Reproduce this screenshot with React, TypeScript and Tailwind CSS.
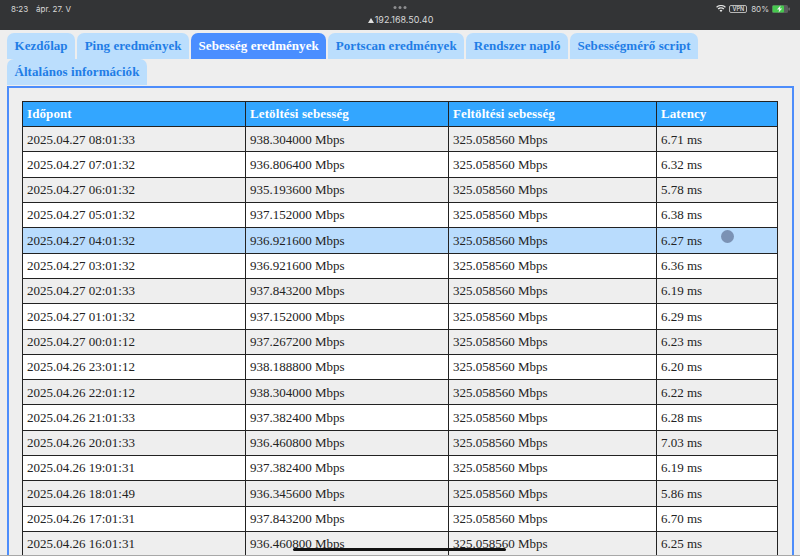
const tabs = [
  { label: 'Kezdőlap' },
  { label: 'Ping eredmények' },
  { label: 'Sebesség eredmények', active: true },
  { label: 'Portscan eredmények' },
  { label: 'Rendszer napló' },
  { label: 'Sebességmérő script' },
  { label: 'Általános információk' },
]

const rows = [
  ['2025.04.27 08:01:33', '938.304000 Mbps', '6.71 ms'],
  ['2025.04.27 07:01:32', '936.806400 Mbps', '6.32 ms'],
  ['2025.04.27 06:01:32', '935.193600 Mbps', '5.78 ms'],
  ['2025.04.27 05:01:32', '937.152000 Mbps', '6.38 ms'],
  ['2025.04.27 04:01:32', '936.921600 Mbps', '6.27 ms'],
  ['2025.04.27 03:01:32', '936.921600 Mbps', '6.36 ms'],
  ['2025.04.27 02:01:33', '937.843200 Mbps', '6.19 ms'],
  ['2025.04.27 01:01:32', '937.152000 Mbps', '6.29 ms'],
  ['2025.04.27 00:01:12', '937.267200 Mbps', '6.23 ms'],
  ['2025.04.26 23:01:12', '938.188800 Mbps', '6.20 ms'],
  ['2025.04.26 22:01:12', '938.304000 Mbps', '6.22 ms'],
  ['2025.04.26 21:01:33', '937.382400 Mbps', '6.28 ms'],
  ['2025.04.26 20:01:33', '936.460800 Mbps', '7.03 ms'],
  ['2025.04.26 19:01:31', '937.382400 Mbps', '6.19 ms'],
  ['2025.04.26 18:01:49', '936.345600 Mbps', '5.86 ms'],
  ['2025.04.26 17:01:31', '937.843200 Mbps', '6.70 ms'],
  ['2025.04.26 16:01:31', '936.460800 Mbps', '6.25 ms'],
]

function rowColor(i: number) {
  if (i === 4) return 'bg-[#b9dcfd]'
  return i % 2 === 0 ? 'bg-[#eeeeee]' : 'bg-white'
}

function StatusBar() {
  return (
    <div className="relative h-[30px] shrink-0 bg-[#333436] font-['Inter',sans-serif] text-[#d8d8d8]">
      <div className="flex h-4 items-center justify-between pl-[11px] pr-[10px] pt-px">
        <div className="flex gap-[8px] text-[8px]">
          <span>8:23</span>
          <span>ápr. 27. V</span>
        </div>
        <div className="flex items-center gap-[3px] text-[8px]">
          <svg width="10" height="7" viewBox="0 0 22 16" fill="#e4e4e4">
            <path d="M11 16 7.6 12.4a5 5 0 0 1 6.8 0zM5.6 10.3 3.4 8a11 11 0 0 1 15.2 0l-2.2 2.3a8 8 0 0 0-10.8 0zM1.6 6 0 4.2a16 16 0 0 1 22 0L20.4 6a13.5 13.5 0 0 0-18.8 0z" />
          </svg>
          <span className="rounded-[2px] border border-[#b8b8b8] px-[2px] text-[5.5px] leading-[6px] font-semibold">VPN</span>
          <span className="ml-[1px]">80%</span>
          <svg width="18" height="8" viewBox="0 0 18 8">
            <rect x="0" y="0" width="16" height="8" rx="1.5" fill="#5a5b5d" />
            <rect x="0.5" y="0.5" width="11.5" height="7" rx="1" fill="#46c84e" />
            <path d="M8.6 0.6 5 4.6h2.2L6.6 7.4l3.6-4H8z" fill="#f2f2f2" />
            <rect x="16.6" y="2.6" width="1" height="2.8" rx="0.5" fill="#8a8a8a" />
          </svg>
        </div>
      </div>
      <div className="absolute left-1/2 top-[6px] flex -translate-x-1/2 gap-[2px]">
        <span className="h-[3px] w-[3px] rounded-full bg-[#8e8e90]" />
        <span className="h-[3px] w-[3px] rounded-full bg-[#8e8e90]" />
        <span className="h-[3px] w-[3px] rounded-full bg-[#8e8e90]" />
      </div>
      <div className="absolute left-[1px] right-0 top-[14px] flex items-center justify-center gap-[1px] text-[9px] leading-[12px]">
        <svg width="6" height="5" viewBox="0 0 6 5" fill="#e0e0e0">
          <path d="M3 0 6 5H0z" />
        </svg>
        <span>192.168.50.40</span>
      </div>
    </div>
  )
}

export default function App() {
  return (
    <div className="relative flex h-[556px] w-[800px] flex-col overflow-hidden bg-[#eeeeee] font-['Liberation_Serif',serif]">
      <StatusBar />

      <div className="flex w-[720px] flex-wrap gap-x-[2px] px-[7px] pt-[3px]">
        {tabs.map((tab) => (
          <div
            key={tab.label}
            className={
              'h-[26px] rounded-t-[7px] px-[7.5px] text-[13px] leading-[26px] font-bold tracking-[0.05px] whitespace-nowrap ' +
              (tab.active ? 'bg-[#4a8eff] text-white' : 'bg-[#bbdefd] text-[#1f7de6]')
            }
          >
            {tab.label}
          </div>
        ))}
      </div>

      <div className="mt-px ml-[7px] mr-[6px] flex-1 border-[2.5px] border-b-0 border-[#4d8dfb] px-[13px] pt-[12.5px]">
        <table className="w-[755px] table-fixed border-collapse text-[13px] text-[#222222]">
          <colgroup>
            <col className="w-[223px]" />
            <col className="w-[203px]" />
            <col className="w-[208px]" />
            <col className="w-[121px]" />
          </colgroup>
          <thead>
            <tr className="h-[25.7px] bg-[#33a6ff] text-white">
              <th className="border border-[#222222] px-[4px] text-left font-bold tracking-[0.1px]">Időpont</th>
              <th className="border border-[#222222] px-[4px] text-left font-bold tracking-[0.1px]">Letöltési sebesség</th>
              <th className="border border-[#222222] px-[4px] text-left font-bold tracking-[0.1px]">Feltöltési sebesség</th>
              <th className="border border-[#222222] px-[4px] text-left font-bold tracking-[0.1px]">Latency</th>
            </tr>
          </thead>
          <tbody>
            {rows.map((row, i) => (
              <tr key={row[0]} className={'h-[25.3px] ' + rowColor(i)}>
                <td className="border border-[#222222] px-[4px]">{row[0]}</td>
                <td className="border border-[#222222] px-[4px]">{row[1]}</td>
                <td className="border border-[#222222] px-[4px]">325.058560 Mbps</td>
                <td className="border border-[#222222] px-[4px]">{row[2]}</td>
              </tr>
            ))}
          </tbody>
        </table>
      </div>

      {/* touch pointer, home indicator and screen edge sit on top of the page */}
      <div className="absolute left-[721px] top-[230px] h-[13px] w-[13px] rounded-full bg-[#7b92b4]" />
      <div className="absolute left-[293px] top-[548px] h-[3px] w-[213px] rounded-full bg-[#111111]" />
      <div className="absolute bottom-0 left-0 right-0 h-px bg-[#a8a8a8]" />
    </div>
  )
}
